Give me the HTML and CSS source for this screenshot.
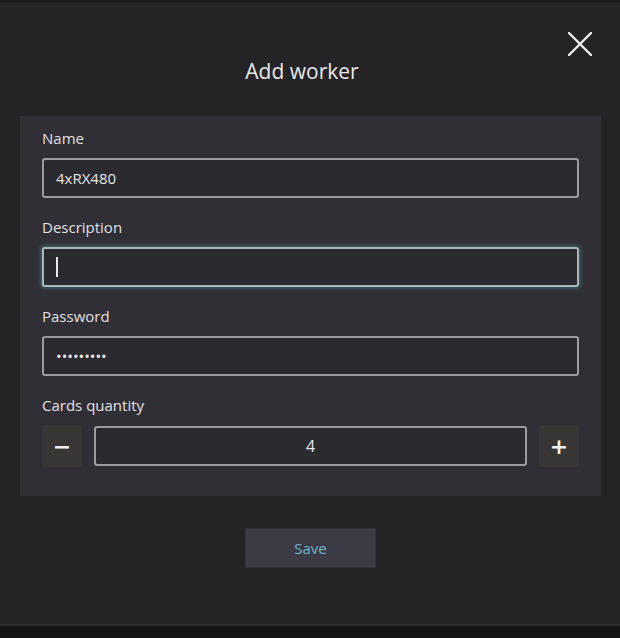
FILE: index.html
```html
<!DOCTYPE html>
<html lang="en">
<head>
  <meta charset="UTF-8">
  <meta name="viewport" content="width=device-width, initial-scale=1">
  <title>Add worker</title>
  <link rel="stylesheet" href="styles.css">
</head>
<body>

  <div class="modal">
    <button class="close" aria-label="Close">
      <svg width="24" height="24" viewBox="0 0 24 24">
        <path d="M1 1 L23 23 M23 1 L1 23" stroke="#eeeeee" stroke-width="2.4" stroke-linecap="round" fill="none"/>
      </svg>
    </button>

    <h2 class="title">Add worker</h2>

    <div class="panel">
      <div class="field">
        <label>Name</label>
        <input type="text" class="input" value="4xRX480">
      </div>

      <div class="field">
        <label>Description</label>
        <div class="input focused"><span class="caret"></span></div>
      </div>

      <div class="field">
        <label>Password</label>
        <input type="password" class="input" value="123456789">
      </div>

      <div class="field last">
        <label>Cards quantity</label>
        <div class="counter">
          <button class="step">&minus;</button>
          <input type="text" class="input number" value="4">
          <button class="step">+</button>
        </div>
      </div>
    </div>

    <div class="actions">
      <button class="save">Save</button>
    </div>
  </div>

  <div class="bottom"></div>

</body>
</html>
```

FILE: styles.css
```css
body {
  margin: 0;
  font-family: "Open Sans", "Noto Sans", sans-serif;
  background-color: #242427;
  color: #e2e2e4;
}

.modal {
  position: relative;
  height: 622px;
  border-top: 2px solid #19191b;
}

.close {
  position: absolute;
  top: 30px;
  left: 568px;
  padding: 0;
  border: none;
  background: none;
  width: 24px;
  height: 24px;
  cursor: pointer;
}

.title {
  margin: 0 16px 0 0;
  padding-top: 55px;
  font-size: 21px;
  line-height: 28px;
  font-weight: 400;
  text-align: center;
  color: #e8e8ea;
}

.panel {
  margin: 31px 19px 0 20px;
  padding: 12px 22px 29px 22px;
  background-color: #312f36;
}

.field {
  margin-bottom: 19px;
}

.field.last {
  margin-bottom: 0;
}

label {
  display: block;
  font-size: 15px;
  line-height: 20px;
  margin-bottom: 10px;
  color: #e0e0e2;
}

.input {
  display: block;
  box-sizing: border-box;
  width: 100%;
  height: 40px;
  padding: 0 12px;
  background-color: #2b2a2f;
  border: 2px solid #9c9ca0;
  border-radius: 3px;
  color: #e6e6e8;
  font-family: inherit;
  font-size: 15px;
  outline: none;
}

.input.focused {
  display: flex;
  align-items: center;
  border-color: #a9b6bb;
  box-shadow: 0 0 4px 1px rgba(74, 138, 150, 0.7);
}

.caret {
  display: block;
  width: 2px;
  height: 20px;
  background-color: #e8e8e8;
}

.counter {
  display: flex;
  align-items: center;
  gap: 12px;
}

.step {
  flex: 0 0 40px;
  height: 42px;
  padding: 0;
  border: none;
  border-radius: 2px;
  background-color: #383635;
  color: #f0f0f0;
  font-family: "DejaVu Sans", sans-serif;
  font-size: 22px;
  font-weight: bold;
  cursor: pointer;
}

.number {
  flex: 1;
  text-align: center;
  font-size: 16px;
}

.actions {
  display: flex;
  justify-content: center;
  padding-top: 32px;
  padding-left: 1px;
}

.save {
  width: 131px;
  height: 40px;
  border: 1px solid #35343c;
  background-color: #3c3a45;
  color: #6fb5cb;
  font-family: inherit;
  font-size: 15px;
  cursor: pointer;
}

.bottom {
  height: 12px;
  border-top: 2px solid #2d2d30;
  background-color: #141416;
}
```
